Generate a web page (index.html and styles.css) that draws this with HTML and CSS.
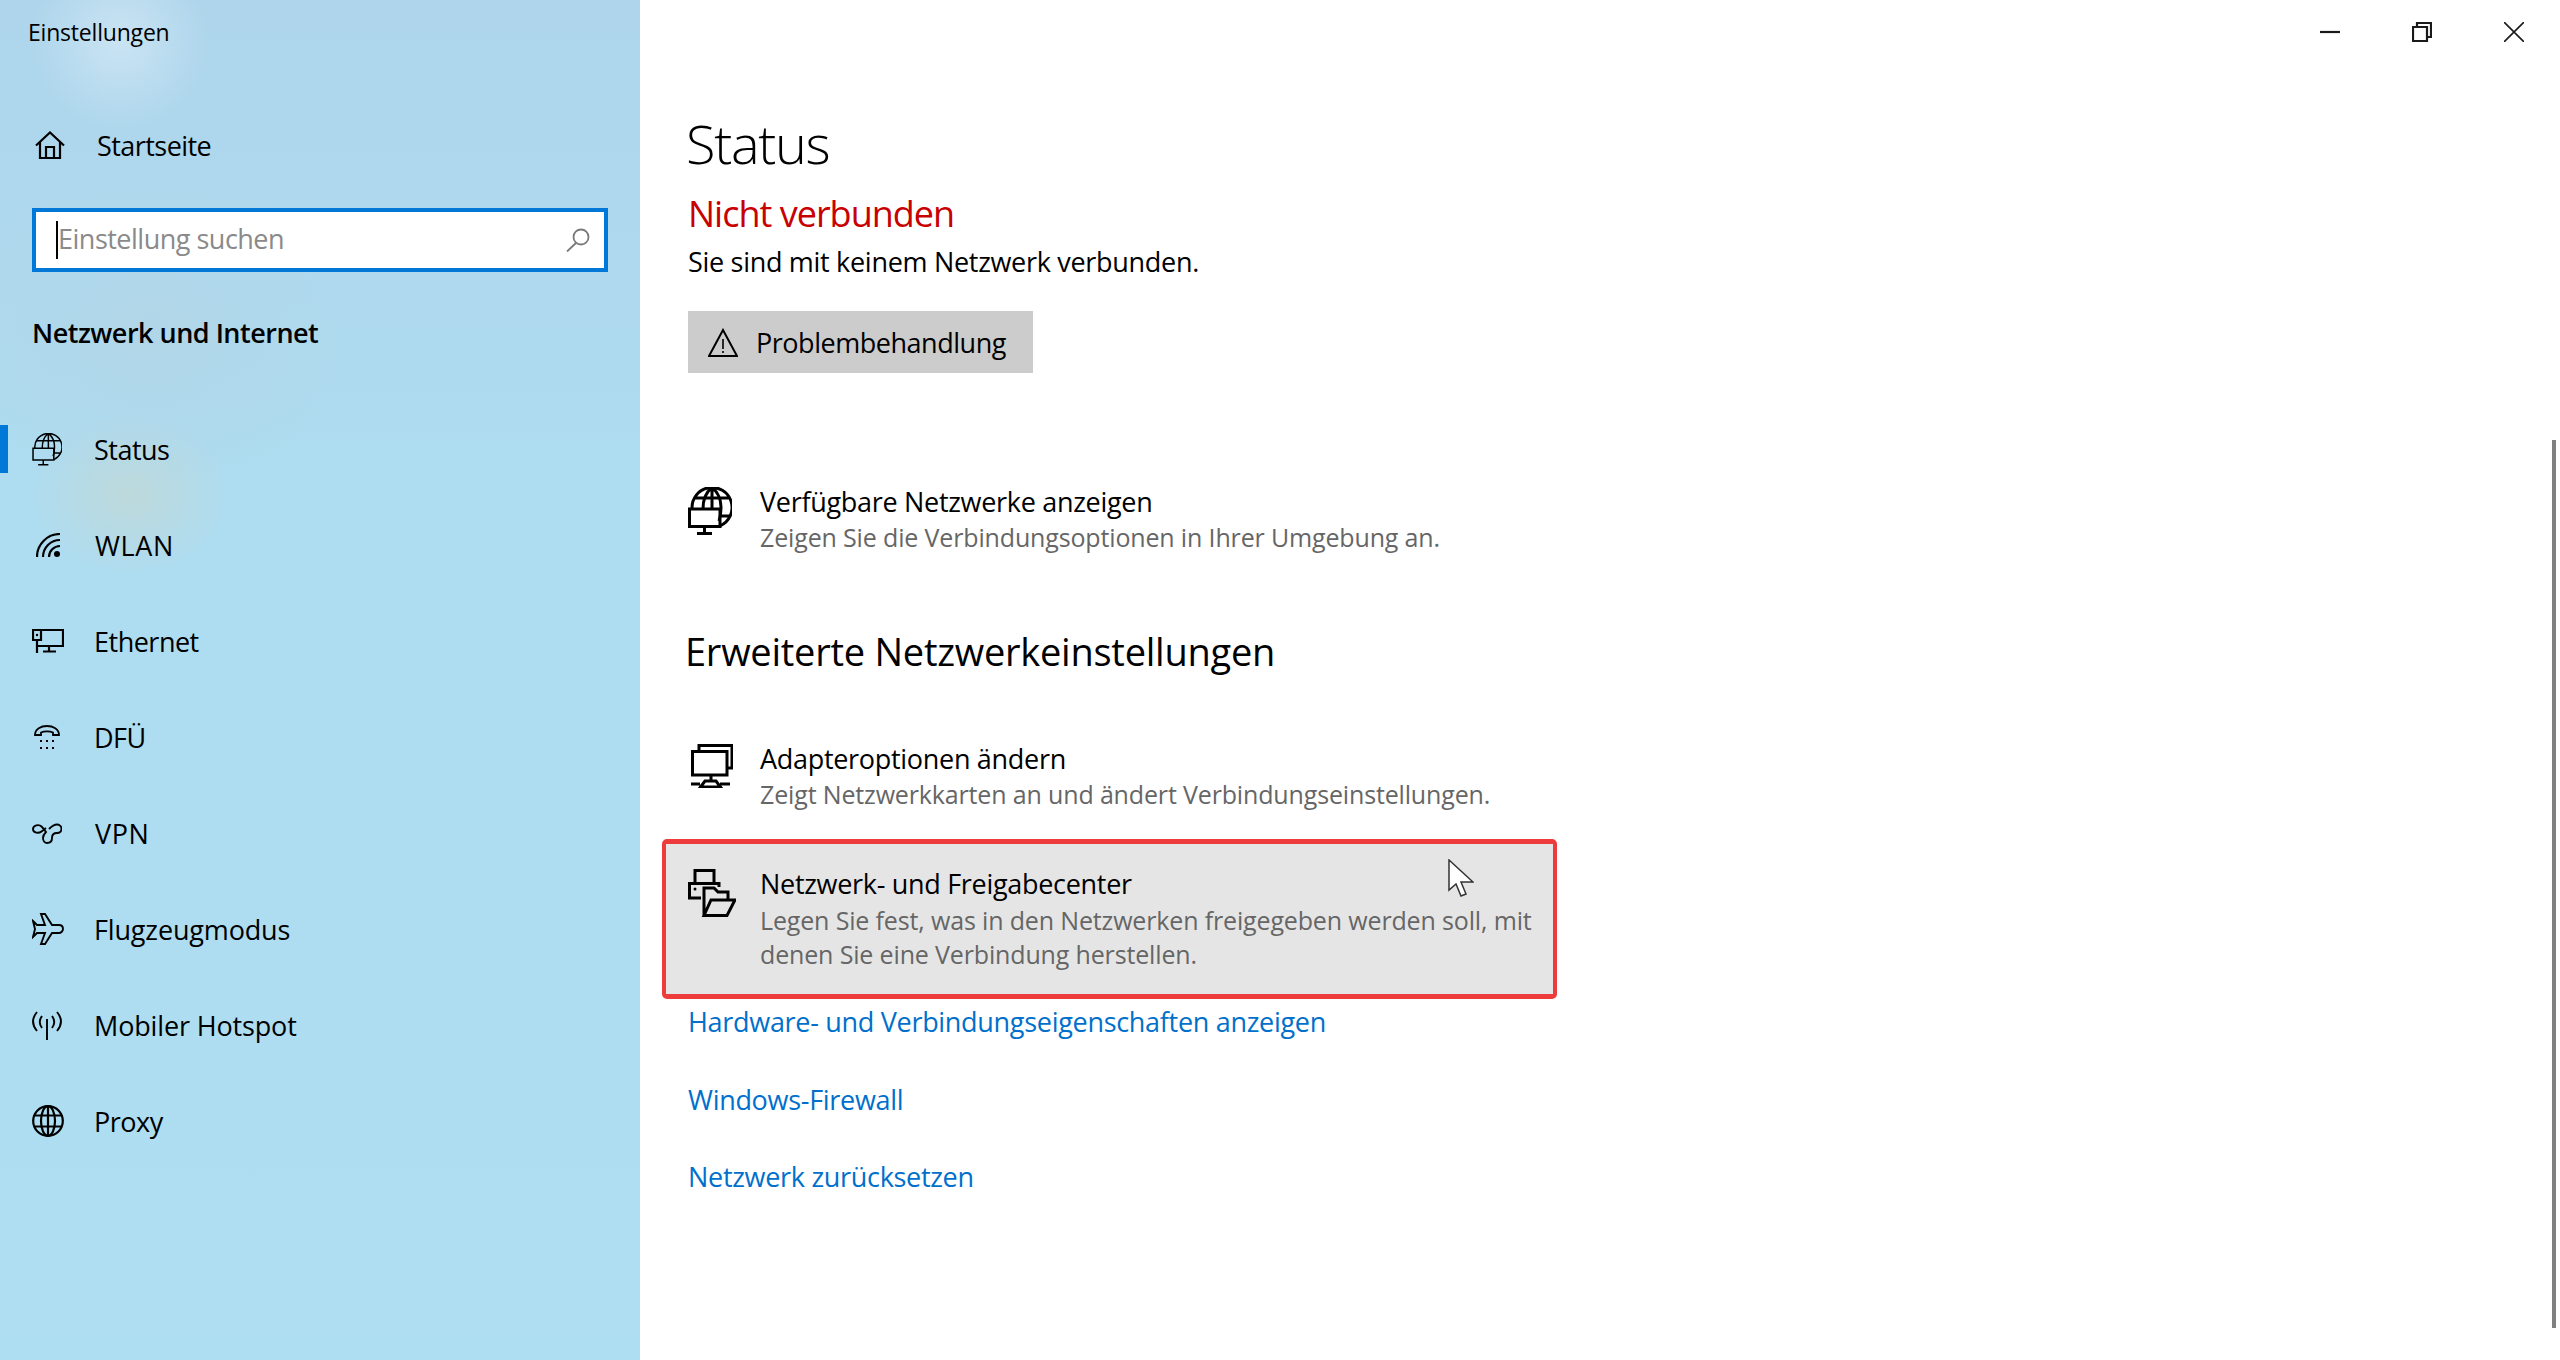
FILE: index.html
```html
<!DOCTYPE html>
<html lang="de">
<head>
    <meta charset="UTF-8">
    <title>Einstellungen</title>
    <link rel="stylesheet" href="styles.css">
</head>
<body>
    <svg class="defs" width="0" height="0">
        <symbol id="net-globe" viewBox="0 0 44 48">
            <path d="M4.1 22A20 20 0 1 1 32 38.8M24 .5C18 5 15 13 15 22M24 .5C30 5 33 13 33 20C33 27 32 31 31 34M7 11H41M24 .5V22M32 29H42"/>
            <path d="M1.5 22H32V39.5H1.5ZM16.5 39.5V46M9 46.5H24"/>
        </symbol>
    </svg>

    <div class="page">
        <aside class="sidebar">
            <div class="app-title">Einstellungen</div>

            <a class="home">
                <svg class="ico ico-home" viewBox="0 0 30 28"><path d="M1 14.5L15 1.5L29 14.5M5 11V27H25V11M11 27V16H19V27"/></svg>
                <span>Startseite</span>
            </a>

            <div class="search">
                <span class="caret"></span>
                <span class="placeholder">Einstellung suchen</span>
                <svg class="search-ico" viewBox="0 0 24 24"><circle cx="15" cy="9" r="7.5"/><path d="M10 15L1 23.5"/></svg>
            </div>

            <div class="section-title">Netzwerk und Internet</div>

            <nav class="nav">
                <a class="nav-item active">
                    <span class="nav-ico"><svg class="ico ico-status"><use href="#net-globe"/></svg></span>
                    <span>Status</span>
                </a>
                <a class="nav-item caps">
                    <span class="nav-ico"><svg class="ico ico-wlan" viewBox="0 0 24 24"><path d="M1 24A23 23 0 0 1 24 1M7 24A17 17 0 0 1 24 7M13 24A11 11 0 0 1 24 13"/><circle class="solid" cx="21" cy="21" r="3"/></svg></span>
                    <span>WLAN</span>
                </a>
                <a class="nav-item">
                    <span class="nav-ico"><svg class="ico ico-eth" viewBox="0 0 32 24"><path d="M1 1H9V11H1ZM9 1H31V17H5M5 11V24M17 17V22M11 22.5H24"/><circle class="solid" cx="5" cy="6" r="1.2"/></svg></span>
                    <span>Ethernet</span>
                </a>
                <a class="nav-item">
                    <span class="nav-ico"><svg class="ico ico-dial" viewBox="0 0 26 24"><path d="M1 10C1 4 7 1 13 1C19 1 25 4 25 10H19V7.5C16 6 10 6 7 7.5V10Z"/><path class="dots" d="M6 15h2v2h-2zM12 15h2v2h-2zM18 15h2v2h-2zM6 22h2v2h-2zM12 22h2v2h-2zM18 22h2v2h-2z"/></svg></span>
                    <span>DFÜ</span>
                </a>
                <a class="nav-item caps">
                    <span class="nav-ico"><svg class="ico ico-vpn" viewBox="0 0 30 21"><path d="M14 5L9.5 8.5C7 10.5 1 10.5 1 6C1 2 7 1 9.5 3.5C12 6 14 9 14 9C14 9 11 12 11 15C11 18 13 20 15 20C18 20 20 18 20 15C20 11 23 10 25 10C28 10 29.5 8 29.5 6C29.5 3 27 1.5 25 1.5C22 1.5 20 3 17 6"/></svg></span>
                    <span>VPN</span>
                </a>
                <a class="nav-item loose">
                    <span class="nav-ico"><svg class="ico ico-plane" viewBox="0 0 32 32"><path d="M1 8L5 12H13L9 1H13L20 12H27C30 12 31 14 31 16C31 18 29 20 27 20H20L13 31H9L13 20H5L1 24L3 16Z"/></svg></span>
                    <span>Flugzeugmodus</span>
                </a>
                <a class="nav-item loose">
                    <span class="nav-ico"><svg class="ico ico-hotspot" viewBox="0 0 30 29"><path d="M15 8V29M10 5C7 9 7 13 10 17M20 5C23 9 23 13 20 17M5 1C0 7 0 14 5 20M25 1C30 7 30 14 25 20"/></svg></span>
                    <span>Mobiler Hotspot</span>
                </a>
                <a class="nav-item">
                    <span class="nav-ico"><svg class="ico ico-proxy" viewBox="0 0 32 32"><circle cx="16" cy="16" r="14.8"/><ellipse cx="16" cy="16" rx="7" ry="14.8"/><path d="M16 1V31M3 10.5H29M3 21.5H29"/></svg></span>
                    <span>Proxy</span>
                </a>
            </nav>
        </aside>

        <main class="main">
            <div class="window-bar">
                <span class="win-btn"><svg class="ico" width="20" height="20" viewBox="0 0 20 20"><path d="M0 10H20"/></svg></span>
                <span class="win-btn"><svg class="ico" width="20" height="20" viewBox="0 0 20 20"><path d="M1 5H15V19H1ZM5 5V1H19V15H15"/></svg></span>
                <span class="win-btn"><svg class="ico ico-thin" width="20" height="20" viewBox="0 0 20 20"><path d="M0 0L20 20M20 0L0 20"/></svg></span>
            </div>

            <h1>Status</h1>
            <div class="state">Nicht verbunden</div>
            <p class="state-desc">Sie sind mit keinem Netzwerk verbunden.</p>

            <button class="trouble">
                <svg class="ico ico-warn" viewBox="0 0 30 29"><path d="M15 2L29 28H1Z"/><path class="thin" d="M15 11V21M15 23V25"/></svg>
                <span>Problembehandlung</span>
            </button>

            <a class="setting first">
                <span class="setting-ico"><svg class="ico ico-net"><use href="#net-globe"/></svg></span>
                <span class="setting-text">
                    <span class="setting-title">Verfügbare Netzwerke anzeigen</span>
                    <span class="setting-sub">Zeigen Sie die Verbindungsoptionen in Ihrer Umgebung an.</span>
                </span>
            </a>

            <h2>Erweiterte Netzwerkeinstellungen</h2>

            <a class="setting adapter">
                <span class="setting-ico"><svg class="ico ico-adapter" viewBox="0 0 42 44"><path d="M8 6.5V1.5H41V24H37"/><path d="M1.5 7.5H36V31H1.5ZM20 31V37M0 40H9M29 40H39M9.5 43L14 37H25L29.5 43Z"/></svg></span>
                <span class="setting-text">
                    <span class="setting-title">Adapteroptionen ändern</span>
                    <span class="setting-sub">Zeigt Netzwerkkarten an und ändert Verbindungseinstellungen.</span>
                </span>
            </a>

            <a class="setting hover">
                <span class="setting-ico"><svg class="ico ico-share" viewBox="0 0 48 48"><path d="M7 14V1.5H26V13M13 29H1.5V14.5H31V18"/><circle class="solid" cx="7" cy="20" r="1.5"/><path d="M16 46.5V19H26L30 23H40V31M16 46.5L23 31H47L39 46.5Z"/></svg></span>
                <span class="setting-text">
                    <span class="setting-title">Netzwerk- und Freigabecenter</span>
                    <span class="setting-sub">Legen Sie fest, was in den Netzwerken freigegeben werden soll, mit denen Sie eine Verbindung herstellen.</span>
                </span>
            </a>

            <ul class="links">
                <li><a>Hardware- und Verbindungseigenschaften anzeigen</a></li>
                <li><a>Windows-Firewall</a></li>
                <li><a>Netzwerk zurücksetzen</a></li>
            </ul>

            <svg class="cursor" viewBox="0 0 26 38"><path d="M1 1V31L8 25L13 37L18 35L13 23H25Z"/></svg>
            <div class="scrollbar"></div>
        </main>
    </div>
</body>
</html>
```

FILE: styles.css
```css
:root {
    --accent: #0078d7;
    --link: #0070cc;
    --sub: #666666;
    --red: #c80000;
}

* {
    box-sizing: border-box;
}

html, body {
    margin: 0;
    height: 100%;
}

body {
    font-family: "Open Sans", "Noto Sans", sans-serif;
    color: #000;
    background: #fff;
    overflow: hidden;
}

.defs {
    display: block;
    height: 0;
}

.page {
    display: flex;
    height: 1360px;
}

.ico {
    display: block;
    fill: none;
    stroke: #000;
    stroke-width: 2.2;
    flex: none;
}

.ico .solid {
    fill: #000;
    stroke: none;
}

/* sidebar */
.sidebar {
    width: 640px;
    flex: none;
    padding-top: 17px;
    background:
        radial-gradient(circle at 120px 40px, rgba(255, 255, 255, 0.35), rgba(255, 255, 255, 0) 90px),
        radial-gradient(ellipse 100px 80px at 130px 495px, rgba(200, 215, 205, 0.6), rgba(200, 215, 205, 0) 100%),
        radial-gradient(ellipse 200px 160px at 150px 330px, rgba(180, 210, 225, 0.5), rgba(180, 210, 225, 0) 100%),
        linear-gradient(180deg, #aed5ec 0, #aedcf0 480px, #aedef2 100%);
}

.app-title {
    font-size: 23px;
    line-height: 30px;
    padding-left: 28px;
    letter-spacing: -0.2px;
}

.home {
    display: flex;
    align-items: center;
    height: 48px;
    margin-top: 74px;
    padding-left: 35px;
    font-size: 27px;
    letter-spacing: -0.55px;
}

.ico-home {
    width: 30px;
    height: 28px;
    margin-right: 32px;
}

.search {
    display: flex;
    align-items: center;
    width: 576px;
    height: 64px;
    margin: 39px 0 0 32px;
    padding: 0 14px 0 20px;
    background: #fff;
    border: 4px solid var(--accent);
}

.caret {
    width: 2px;
    height: 38px;
    background: #000;
}

.placeholder {
    flex: 1;
    padding-bottom: 4px;
    font-size: 27px;
    letter-spacing: -0.5px;
    color: #8a8a8a;
}

.search-ico {
    width: 24px;
    height: 24px;
    fill: none;
    stroke: #7a7a7a;
    stroke-width: 1.8;
}

.section-title {
    margin: 41px 0 0 32px;
    font-size: 27px;
    line-height: 40px;
    font-weight: 600;
    letter-spacing: -0.5px;
}

.nav {
    margin-top: 48px;
}

.nav-item {
    display: flex;
    align-items: center;
    height: 96px;
    padding-left: 32px;
    font-size: 27px;
    letter-spacing: -0.5px;
    position: relative;
}

.nav-item.caps {
    letter-spacing: 0.6px;
}

.nav-item.caps .nav-ico {
    width: 63px;
}

.nav-item.loose {
    letter-spacing: -0.15px;
}

.nav-ico {
    width: 62px;
    display: flex;
}

.nav-item.active::before {
    content: "";
    position: absolute;
    left: 0;
    top: 24px;
    width: 8px;
    height: 48px;
    background: var(--accent);
}

.ico-status { width: 30px; height: 33px; }
.ico-wlan { width: 24px; height: 24px; margin-left: 4px; }
.ico-eth { width: 32px; height: 24px; }
.ico-dial { width: 26px; height: 24px; margin-left: 2px; stroke-width: 1.8; }
.ico-vpn { width: 30px; height: 21px; stroke-width: 1.9; }
.ico-plane { width: 32px; height: 32px; stroke-width: 1.9; }
.ico-hotspot { width: 30px; height: 29px; stroke-width: 1.9; }
.ico-proxy { width: 32px; height: 32px; }

.ico-dial .dots {
    fill: #000;
    stroke: none;
}

/* content */
.main {
    flex: 1;
    position: relative;
    padding-left: 48px;
}

.window-bar {
    display: flex;
    justify-content: flex-end;
    height: 64px;
}

.win-btn {
    width: 92px;
    display: flex;
    align-items: center;
    justify-content: center;
}

.win-btn .ico {
    stroke: #1a1a1a;
}

.win-btn .ico-thin {
    stroke-width: 1.6;
}

h1 {
    margin: 47px 0 0 -2px;
    font-size: 54px;
    line-height: 64px;
    font-weight: 300;
    letter-spacing: -1.3px;
}

.state {
    margin-top: 17px;
    font-size: 36px;
    line-height: 44px;
    letter-spacing: -1px;
    color: var(--red);
}

.state-desc {
    margin: 8px 0 0;
    font-size: 27px;
    line-height: 36px;
    letter-spacing: -0.3px;
}

.trouble {
    display: flex;
    align-items: center;
    width: 345px;
    height: 62px;
    margin-top: 31px;
    padding: 0 0 0 20px;
    border: none;
    background: #cccccc;
    color: #000;
    font: inherit;
    font-size: 27px;
    letter-spacing: -0.47px;
}

.ico-warn {
    width: 30px;
    height: 29px;
    margin-right: 18px;
    stroke-width: 2;
}

.ico-warn .thin {
    stroke-width: 1.6;
}

.setting {
    display: flex;
    width: 895px;
    margin-left: -26px;
    padding-left: 26px;
}

.setting-ico {
    width: 72px;
    flex: none;
    padding-top: 3px;
}

.setting-text {
    display: block;
}

.setting-title {
    display: block;
    font-size: 27px;
    line-height: 36px;
    letter-spacing: -0.3px;
}

.setting-sub {
    display: block;
    font-size: 25px;
    line-height: 34px;
    letter-spacing: -0.15px;
    color: var(--sub);
}

.setting.first {
    margin-top: 111px;
}

.ico-net { width: 44px; height: 48px; stroke-width: 3; }
.ico-adapter { width: 42px; height: 44px; stroke-width: 3; margin-left: 3px; }
.ico-share { width: 48px; height: 48px; stroke-width: 3; }

h2 {
    margin: 72px 0 0 -3px;
    font-size: 38px;
    line-height: 50px;
    font-weight: 400;
    letter-spacing: -0.25px;
}

.setting.adapter {
    margin-top: 65px;
}

.setting.hover {
    height: 160px;
    margin-top: 28px;
    padding-top: 22px;
    padding-left: 22px;
    background: #e5e5e5;
    border: solid #ee3c3c;
    border-width: 5px 4px;
    border-radius: 5px;
}

.setting.hover .setting-sub {
    position: relative;
    top: 1px;
}

.links {
    list-style: none;
    margin: 5px 0 0;
    padding: 0;
}

.links li {
    height: 77.5px;
    font-size: 27px;
    line-height: 36px;
    letter-spacing: -0.3px;
    color: var(--link);
}

/* overlays */
.cursor {
    position: absolute;
    left: 808px;
    top: 859px;
    width: 26px;
    height: 38px;
    fill: #fff;
    stroke: #333;
    stroke-width: 1.5;
}

.scrollbar {
    position: absolute;
    right: 4px;
    top: 440px;
    width: 4px;
    height: 888px;
    background: #808080;
}
```
